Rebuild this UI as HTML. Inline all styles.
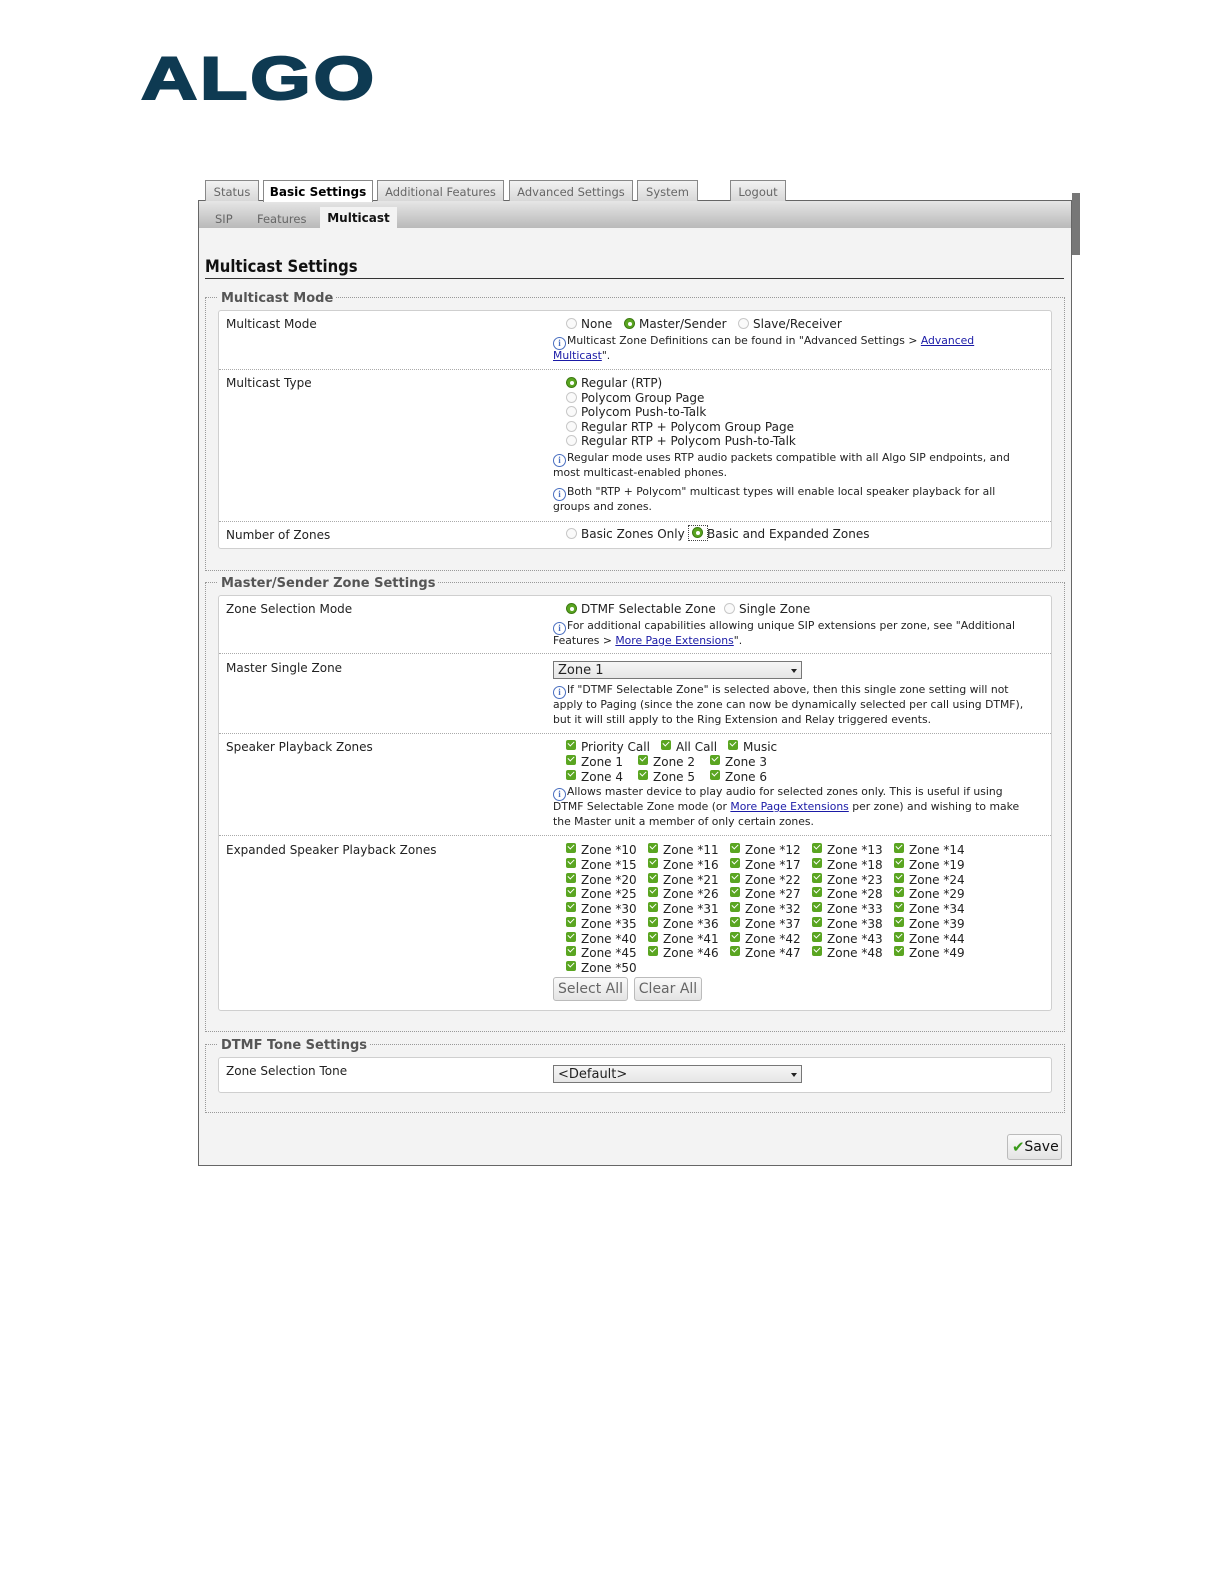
<!DOCTYPE html>
<html><head><meta charset="utf-8"><style>
body{margin:0;width:1224px;height:1584px;background:#fff;position:relative;font-family:"DejaVu Sans","Liberation Sans",sans-serif;color:#222;overflow:hidden}
.a{position:absolute;white-space:nowrap}
.t{position:absolute;white-space:nowrap;font-size:12px;line-height:16px}
.i{position:absolute;white-space:nowrap;font-size:10.8px;line-height:15px;color:#222}
a{color:#1a1aa6;text-decoration:underline}
.tab{position:absolute;top:180px;height:21px;border:1px solid #888;border-bottom:none;background:linear-gradient(#f2f2f2,#d8d8d8);font-size:11.5px;line-height:22px;color:#666;text-align:center;box-sizing:border-box}
.rb{position:absolute;width:9px;height:9px;border:1px solid #c8c8c8;border-radius:50%;background:#fafafa}
.rb.on{border:1px solid #3c7a12;background:#5aa521}
.rb.on:after{content:"";position:absolute;left:2.5px;top:2.5px;width:4px;height:4px;border-radius:50%;background:#fff}
.cb{position:absolute;width:10px;height:10px;border-radius:2px;background:#5aa521}
.cb:after{content:"";position:absolute;left:2px;top:1px;width:5px;height:3px;border-left:1.6px solid #fff;border-bottom:1.6px solid #fff;transform:rotate(-45deg)}
.fs{position:absolute;border:1px dotted #999;box-sizing:border-box}
.lg{position:absolute;font-size:13px;font-weight:bold;color:#555;background:#f3f3f3;padding:0 3px;line-height:16px}
.box{position:absolute;border:1px solid #cfcfcf;border-radius:3px;background:#fff;box-sizing:border-box}
.hr{position:absolute;height:0;border-top:1px dotted #aaa}
.ic{display:inline-block;width:11px;height:11px;border:1px solid #4a6fc0;border-radius:50%;font-size:9px;line-height:11px;text-align:center;color:#4a6fc0;vertical-align:-2px;font-family:"Liberation Serif",serif;font-weight:bold;margin-right:1px}
.sel{position:absolute;height:18px;border:1px solid #777;background:linear-gradient(#f6f6f6,#e6e6e6);font-size:13px;line-height:18px;padding-left:4px;box-sizing:border-box}
.sel:after{content:"";position:absolute;right:4px;top:7px;border:3px solid transparent;border-top:4px solid #222}
.btn{position:absolute;height:24px;border:1px solid #bbb;border-radius:3px;background:linear-gradient(#fafafa,#e4e4e4);font-size:14px;line-height:23px;color:#666;text-align:center;box-sizing:border-box}
</style></head><body>

<div class="a" style="left:141px;top:44px;font-family:'Liberation Sans',sans-serif;font-weight:900;font-size:60px;letter-spacing:2px;color:#0e3a52;line-height:70px;transform:scaleX(1.3);transform-origin:left;-webkit-text-stroke:2px #0e3a52">ALGO</div>

<!-- frame -->
<div class="a" style="left:198px;top:200px;width:874px;height:966px;border:1px solid #666;box-sizing:border-box;background:#f3f3f3"></div>
<div class="a" style="left:199px;top:201px;width:872px;height:27px;background:linear-gradient(#e6e6e6,#b9b9b9)"></div>
<div class="a" style="left:1072px;top:193px;width:8px;height:62px;background:#777"></div>

<div class="tab" style="left:205px;width:54px">Status</div>
<div class="tab" style="left:263px;width:110px;height:22px;background:#fff;color:#000;font-weight:bold;font-size:12px">Basic Settings</div>
<div class="tab" style="left:377px;width:127px">Additional Features</div>
<div class="tab" style="left:509px;width:124px">Advanced Settings</div>
<div class="tab" style="left:637px;width:61px">System</div>
<div class="tab" style="left:730px;width:56px">Logout</div>

<div class="t" style="left:215px;top:211px;font-size:11.5px;color:#666">SIP</div>
<div class="t" style="left:257px;top:211px;font-size:11.5px;color:#666">Features</div>
<div class="a" style="left:320px;top:207px;width:77px;height:21px;background:#f3f3f3;font-size:12px;font-weight:bold;line-height:22px;text-align:center;color:#111">Multicast</div>

<div class="a" style="left:205px;top:256px;font-size:16.5px;font-weight:bold;line-height:22px;color:#111;font-family:'DejaVu Sans Condensed','DejaVu Sans',sans-serif">Multicast Settings</div>
<div class="a" style="left:205px;top:278px;width:859px;height:1px;background:#333"></div>

<!-- Fieldset 1 -->
<div class="fs" style="left:205px;top:297px;width:860px;height:274px"></div>
<div class="lg" style="left:218px;top:291px">Multicast Mode</div>
<div class="box" style="left:218px;top:310px;width:834px;height:239px"></div>
<div class="hr" style="left:219px;top:369px;width:832px"></div>
<div class="hr" style="left:219px;top:521px;width:832px"></div>

<div class="t" style="left:226px;top:316px">Multicast Mode</div>
<div class="rb" style="left:566px;top:318px"></div><div class="t" style="left:581px;top:316px">None</div>
<div class="rb on" style="left:624px;top:318px"></div><div class="t" style="left:639px;top:316px">Master/Sender</div>
<div class="rb" style="left:738px;top:318px"></div><div class="t" style="left:753px;top:316px">Slave/Receiver</div>
<div class="i" style="left:553px;top:333px"><span class="ic">i</span>Multicast Zone Definitions can be found in "Advanced Settings &gt; <a>Advanced</a></div>
<div class="i" style="left:553px;top:348px"><a>Multicast</a>".</div>

<div class="t" style="left:226px;top:375px">Multicast Type</div>
<div class="rb on" style="left:566px;top:377px"></div><div class="t" style="left:581px;top:375px">Regular (RTP)</div>
<div class="rb" style="left:566px;top:392px"></div><div class="t" style="left:581px;top:390px">Polycom Group Page</div>
<div class="rb" style="left:566px;top:406px"></div><div class="t" style="left:581px;top:404px">Polycom Push-to-Talk</div>
<div class="rb" style="left:566px;top:421px"></div><div class="t" style="left:581px;top:419px">Regular RTP + Polycom Group Page</div>
<div class="rb" style="left:566px;top:435px"></div><div class="t" style="left:581px;top:433px">Regular RTP + Polycom Push-to-Talk</div>
<div class="i" style="left:553px;top:450px"><span class="ic">i</span>Regular mode uses RTP audio packets compatible with all Algo SIP endpoints, and</div>
<div class="i" style="left:553px;top:465px">most multicast-enabled phones.</div>
<div class="i" style="left:553px;top:484px"><span class="ic">i</span>Both "RTP + Polycom" multicast types will enable local speaker playback for all</div>
<div class="i" style="left:553px;top:499px">groups and zones.</div>

<div class="t" style="left:226px;top:527px">Number of Zones</div>
<div class="rb" style="left:566px;top:528px"></div><div class="t" style="left:581px;top:526px">Basic Zones Only</div>
<div class="a" style="left:688px;top:525px;width:18px;height:14px;border:1px dotted #444"></div>
<div class="rb on" style="left:692px;top:527px"></div><div class="t" style="left:707px;top:526px">Basic and Expanded Zones</div>

<!-- Fieldset 2 -->
<div class="fs" style="left:205px;top:582px;width:860px;height:450px"></div>
<div class="lg" style="left:218px;top:576px">Master/Sender Zone Settings</div>
<div class="box" style="left:218px;top:595px;width:834px;height:416px"></div>
<div class="hr" style="left:219px;top:653px;width:832px"></div>
<div class="hr" style="left:219px;top:733px;width:832px"></div>
<div class="hr" style="left:219px;top:835px;width:832px"></div>

<div class="t" style="left:226px;top:601px">Zone Selection Mode</div>
<div class="rb on" style="left:566px;top:603px"></div><div class="t" style="left:581px;top:601px">DTMF Selectable Zone</div>
<div class="rb" style="left:724px;top:603px"></div><div class="t" style="left:739px;top:601px">Single Zone</div>
<div class="i" style="left:553px;top:618px"><span class="ic">i</span>For additional capabilities allowing unique SIP extensions per zone, see "Additional</div>
<div class="i" style="left:553px;top:633px">Features &gt; <a>More Page Extensions</a>".</div>

<div class="t" style="left:226px;top:660px">Master Single Zone</div>
<div class="sel" style="left:553px;top:661px;width:249px">Zone 1</div>
<div class="i" style="left:553px;top:682px"><span class="ic">i</span>If "DTMF Selectable Zone" is selected above, then this single zone setting will not</div>
<div class="i" style="left:553px;top:697px">apply to Paging (since the zone can now be dynamically selected per call using DTMF),</div>
<div class="i" style="left:553px;top:712px">but it will still apply to the Ring Extension and Relay triggered events.</div>

<div class="t" style="left:226px;top:739px">Speaker Playback Zones</div>
<div class="cb" style="left:566px;top:740px"></div><div class="t" style="left:581px;top:739px">Priority Call</div>
<div class="cb" style="left:661px;top:740px"></div><div class="t" style="left:676px;top:739px">All Call</div>
<div class="cb" style="left:728px;top:740px"></div><div class="t" style="left:743px;top:739px">Music</div>
<div class="cb" style="left:566px;top:755px"></div><div class="t" style="left:581px;top:754px">Zone 1</div>
<div class="cb" style="left:638px;top:755px"></div><div class="t" style="left:653px;top:754px">Zone 2</div>
<div class="cb" style="left:710px;top:755px"></div><div class="t" style="left:725px;top:754px">Zone 3</div>
<div class="cb" style="left:566px;top:770px"></div><div class="t" style="left:581px;top:769px">Zone 4</div>
<div class="cb" style="left:638px;top:770px"></div><div class="t" style="left:653px;top:769px">Zone 5</div>
<div class="cb" style="left:710px;top:770px"></div><div class="t" style="left:725px;top:769px">Zone 6</div>
<div class="i" style="left:553px;top:784px"><span class="ic">i</span>Allows master device to play audio for selected zones only. This is useful if using</div>
<div class="i" style="left:553px;top:799px">DTMF Selectable Zone mode (or <a>More Page Extensions</a> per zone) and wishing to make</div>
<div class="i" style="left:553px;top:814px">the Master unit a member of only certain zones.</div>

<div class="t" style="left:226px;top:842px">Expanded Speaker Playback Zones</div>
<div id="z"></div>
<script>
var h="",xs=[566,648,730,812,894];
for(var n=10;n<=50;n++){var k=n-10,c=k%5,r=Math.floor(k/5),y=842+r*14.75;
h+='<div class="cb" style="left:'+xs[c]+'px;top:'+(y+1)+'px"></div><div class="t" style="left:'+(xs[c]+15)+'px;top:'+y+'px">Zone *'+n+'</div>';}
document.getElementById("z").outerHTML=h;
</script>
<div class="btn" style="left:553px;top:977px;width:75px">Select All</div>
<div class="btn" style="left:634px;top:977px;width:68px">Clear All</div>

<!-- Fieldset 3 -->
<div class="fs" style="left:205px;top:1044px;width:860px;height:69px"></div>
<div class="lg" style="left:218px;top:1038px">DTMF Tone Settings</div>
<div class="box" style="left:218px;top:1057px;width:834px;height:36px"></div>
<div class="t" style="left:226px;top:1063px">Zone Selection Tone</div>
<div class="sel" style="left:553px;top:1065px;width:249px">&lt;Default&gt;</div>

<div class="btn" style="left:1007px;top:1134px;width:55px;height:26px;color:#111;line-height:25px;padding-left:14px"><span style="position:absolute;left:4px;top:0;color:#3a9a1a;font-size:15px">✔</span>Save</div>
</body></html>
